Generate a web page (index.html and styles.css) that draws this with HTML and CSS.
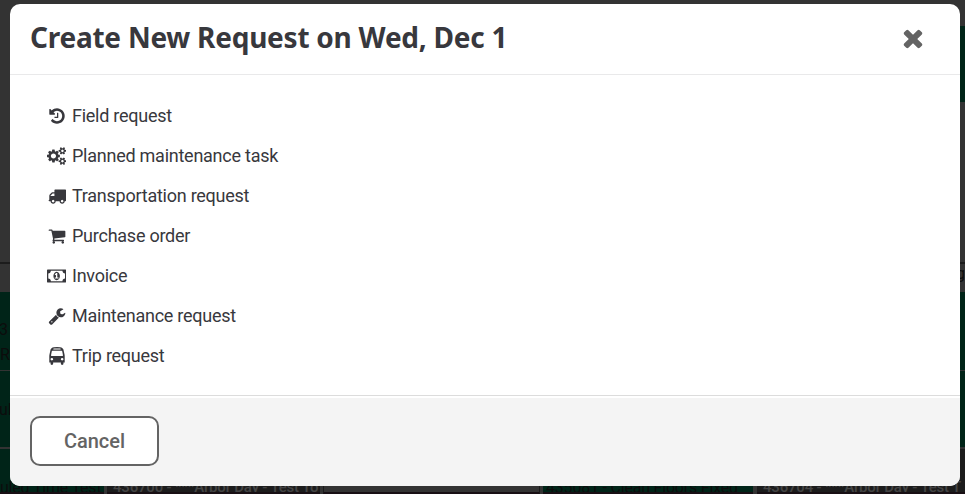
FILE: index.html
```html
<!DOCTYPE html>
<html lang="en-US">
<head>
<meta charset="utf-8">
<title>Create New Request</title>
<link rel="stylesheet" href="styles.css">
</head>
<body>
<!-- calendar behind the dialog -->
<div class="calendar" aria-hidden="true">
	<div class="day day-sun">
		<div class="head"></div>
		<div class="date"></div>
		<div class="event tall">3<br>RI</div>
		<div class="event second">ul</div>
		<div class="event last">uled Time Test</div>
	</div>
	<div class="day day-mon">
		<div class="head"></div>
		<div class="date"></div>
		<div class="event tall"></div>
		<div class="event second"></div>
		<div class="event last dark">436700 - ***Arbor Day - Test To</div>
	</div>
	<div class="day day-tue">
		<div class="head"></div>
		<div class="date"></div>
		<div class="event tall"></div>
		<div class="event second"></div>
		<div class="event last empty"></div>
	</div>
	<div class="day day-wed">
		<div class="head"></div>
		<div class="date"></div>
		<div class="event tall"></div>
		<div class="event second"></div>
		<div class="event last">435081 - Clean Floors Fixed</div>
	</div>
	<div class="day day-thu">
		<div class="head"><div class="save"></div></div>
		<div class="date">g</div>
		<div class="event tall"></div>
		<div class="event second"></div>
		<div class="event last dark">436704 - ***Arbor Day - Test T</div>
	</div>
</div>

<div class="modal">
	<div class="modal-header">
		<h1>Create New Request on Wed, Dec 1</h1>
		<button class="close" aria-label="Close"><svg viewBox="0 0 1792 1792"><path d="M1490 1322q0 40-28 68l-136 136q-28 28-68 28t-68-28l-294-294-294 294q-28 28-68 28t-68-28l-136-136q-28-28-28-68t28-68l294-294-294-294q-28-28-28-68t28-68l136-136q28-28 68-28t68 28l294 294 294-294q28-28 68-28t68 28l136 136q28 28 28 68t-28 68l-294 294 294 294q28 28 28 68z"/></svg></button>
	</div>
	<ul class="modal-body">
		<li><span class="icon"><svg viewBox="0 0 1792 1792"><path d="M1664 896q0 156-61 298t-164 245-245 164-298 61q-172 0-327-72.5t-264-204.5q-7-10-6.5-22.5t8.5-20.5l137-138q10-9 25-9 16 2 23 12 73 95 179 147t225 52q104 0 198.5-40.5t163.5-109.5 109.5-163.5 40.5-198.5-40.5-198.5-109.5-163.5-163.5-109.5-198.5-40.5q-98 0-188 35.5t-160 101.5l137 138q31 30 14 69-17 40-59 40h-448q-26 0-45-19t-19-45v-448q0-42 40-59 39-17 69 14l130 129q107-101 244.5-156.5t284.5-55.5q156 0 298 61t245 164 164 245 61 298zm-640-288v448q0 14-9 23t-23 9h-320q-14 0-23-9t-9-23v-64q0-14 9-23t23-9h224v-352q0-14 9-23t23-9h64q14 0 23 9t9 23z"/></svg></span>Field request</li>
		<li><span class="icon"><svg class="wide" viewBox="0 0 1920 1792"><path d="M896 896q0-106-75-181t-181-75-181 75-75 181 75 181 181 75 181-75 75-181zm768 512q0-52-38-90t-90-38-90 38-38 90q0 53 37.5 90.5t90.5 37.5 90.5-37.5 37.5-90.5zm0-1024q0-52-38-90t-90-38-90 38-38 90q0 53 37.5 90.5t90.5 37.5 90.5-37.5 37.5-90.5zm-384 421v185q0 10-7 19.5t-16 10.5l-155 24q-11 35-32 76 34 48 90 115 7 11 7 20 0 12-7 19-23 30-82.5 89.5t-78.5 59.5q-11 0-21-7l-115-90q-37 19-77 31-11 108-23 155-7 24-30 24h-186q-11 0-20-7.5t-10-17.5l-23-153q-34-10-75-31l-118 89q-7 7-20 7-11 0-21-8-144-133-144-160 0-9 7-19 10-14 41-53t47-61q-23-44-35-82l-152-24q-10-1-17-9.5t-7-19.5v-185q0-10 7-19.5t16-10.5l155-24q11-35 32-76-34-48-90-115-7-11-7-20 0-12 7-20 22-30 82-89t79-59q11 0 21 7l115 90q34-18 77-32 11-108 23-154 7-24 30-24h186q11 0 20 7.5t10 17.5l23 153q34 10 75 31l118-89q8-7 20-7 11 0 21 8 144 133 144 160 0 8-7 19-12 16-42 54t-45 60q23 48 34 82l152 23q10 2 17 10.5t7 19.5zm640 533v140q0 16-149 31-12 27-30 52 51 113 51 138 0 4-4 7-122 71-124 71-8 0-46-47t-52-68q-20 2-30 2t-30-2q-14 21-52 68t-46 47q-2 0-124-71-4-3-4-7 0-25 51-138-18-25-30-52-149-15-149-31v-140q0-16 149-31 13-29 30-52-51-113-51-138 0-4 4-7 4-2 35-20t59-34 30-16q8 0 46 46.5t52 67.5q20-2 30-2t30 2q51-71 92-112l6-2q4 0 124 70 4 3 4 7 0 25-51 138 17 23 30 52 149 15 149 31zm0-1024v140q0 16-149 31-12 27-30 52 51 113 51 138 0 4-4 7-122 71-124 71-8 0-46-47t-52-68q-20 2-30 2t-30-2q-14 21-52 68t-46 47q-2 0-124-71-4-3-4-7 0-25 51-138-18-25-30-52-149-15-149-31v-140q0-16 149-31 13-29 30-52-51-113-51-138 0-4 4-7 4-2 35-20t59-34 30-16q8 0 46 46.5t52 67.5q20-2 30-2t30 2q51-71 92-112l6-2q4 0 124 70 4 3 4 7 0 25-51 138 17 23 30 52 149 15 149 31z"/></svg></span>Planned maintenance task</li>
		<li><span class="icon"><svg viewBox="0 0 1792 1792"><path d="M640 1408q0-52-38-90t-90-38-90 38-38 90 38 90 90 38 90-38 38-90zm-384-512h384v-256h-158q-13 0-22 9l-195 195q-9 9-9 22v30zm1280 512q0-52-38-90t-90-38-90 38-38 90 38 90 90 38 90-38 38-90zm256-1088v1024q0 15-4 26.5t-13.5 18.5-16.5 11.5-23.5 6-22.5 2-25.5 0-22.5-.5q0 106-75 181t-181 75-181-75-75-181h-384q0 106-75 181t-181 75-181-75-75-181h-64q-3 0-22.5.5t-25.5 0-22.5-2-23.5-6-16.5-11.5-13.5-18.5-4-26.5q0-26 19-45t45-19v-320q0-8-.5-35t0-38 2.5-34.5 6.5-37 14-30.5 22.5-30l198-198q19-19 50.5-32t58.5-13h160v-192q0-26 19-45t45-19h1024q26 0 45 19t19 45z"/></svg></span>Transportation request</li>
		<li><span class="icon"><svg viewBox="0 0 1792 1792"><path d="M704 1536q0 52-38 90t-90 38-90-38-38-90 38-90 90-38 90 38 38 90zm896 0q0 52-38 90t-90 38-90-38-38-90 38-90 90-38 90 38 38 90zm128-1088v512q0 24-16.5 42.5t-40.5 21.5l-1044 122q13 60 13 70 0 16-24 64h920q26 0 45 19t19 45-19 45-45 19h-1024q-26 0-45-19t-19-45q0-11 8-31.5t16-36 21.5-40 15.5-29.5l-177-823h-204q-26 0-45-19t-19-45 19-45 45-19h256q16 0 28.5 6.5t19.5 15.5 13 24.5 8 26 5.5 29.5 4.5 26h1201q26 0 45 19t19 45z"/></svg></span>Purchase order</li>
		<li><span class="icon"><svg class="wide" viewBox="0 0 1920 1792"><path d="M768 1152h384v-96h-128v-448h-114l-148 137 77 80q42-37 55-57h2v288h-128v96zm512-256q0 70-21 142t-59.5 134-101.5 101-138 39-138-39-101.5-101-59.5-134-21-142 21-142 59.5-134 101.5-101 138-39 138 39 101.5 101 59.5 134 21 142zm512 256v-512q-106 0-181-75t-75-181h-1152q0 106-75 181t-181 75v512q106 0 181 75t75 181h1152q0-106 75-181t181-75zm128-832v1152q0 26-19 45t-45 19h-1792q-26 0-45-19t-19-45v-1152q0-26 19-45t45-19h1792q26 0 45 19t19 45z"/></svg></span>Invoice</li>
		<li><span class="icon"><svg viewBox="0 0 1792 1792"><path d="M448 1472q0-26-19-45t-45-19-45 19-19 45 19 45 45 19 45-19 19-45zm644-420l-682 682q-37 37-90 37-52 0-91-37l-106-108q-38-36-38-90 0-53 38-91l681-681q39 98 114.5 173.5t173.5 114.5zm634-435q0 39-23 106-47 134-164.5 217.5t-258.5 83.5q-185 0-316.5-131.5t-131.5-316.5 131.5-316.5 316.5-131.5q58 0 121.5 16.5t107.5 46.5q16 11 16 28t-16 28l-293 169v224l193 107q5-3 79-48.5t135.5-81 70.5-35.5q15 0 23.5 10t8.5 25z"/></svg></span>Maintenance request</li>
		<li><span class="icon"><svg viewBox="0 0 1792 1792"><path d="M512 1216q0-53-37.5-90.5t-90.5-37.5-90.5 37.5-37.5 90.5 37.5 90.5 90.5 37.5 90.5-37.5 37.5-90.5zm1024 0q0-53-37.5-90.5t-90.5-37.5-90.5 37.5-37.5 90.5 37.5 90.5 90.5 37.5 90.5-37.5 37.5-90.5zm-46-396l-72-384q-5-23-22.5-37.5t-40.5-14.5h-918q-23 0-40.5 14.5t-22.5 37.5l-72 384q-5 30 14 53t49 23h1062q30 0 49-23t14-53zm-226-612q0-20-14-34t-34-14h-640q-20 0-34 14t-14 34 14 34 34 14h640q20 0 34-14t14-34zm400 725v603h-128v128q0 53-37.5 90.5t-90.5 37.5-90.5-37.5-37.5-90.5v-128h-768v128q0 53-37.5 90.5t-90.5 37.5-90.5-37.5-37.5-90.5v-128h-128v-603q0-112 25-223l103-454q9-78 97.5-137t230-89 312.5-30 312.5 30 230 89 97.5 137l105 454q23 102 23 223z"/></svg></span>Trip request</li>
	</ul>
	<div class="modal-footer">
		<button class="cancel">Cancel</button>
	</div>
</div>
</body>
</html>
```

FILE: styles.css
```css
* {
	box-sizing: border-box;
}
body {
	margin: 0;
	height: 494px;
	overflow: hidden;
	background-color: #333;
	color: #38383d;
	font-family: Roboto, sans-serif;
	font-size: 18px;
}

/* calendar */
.calendar {
	display: grid;
	grid-template-columns: 104px 219px 220px 210px 212px;
	height: 494px;
	overflow: hidden;
	color: #0c0c0c;
	font-size: 16px;
}
.day {
	overflow: hidden;
}
.day-mon .last {
	margin-left: 3px;
	margin-right: 3px;
}
.day-thu .last {
	margin-left: 4px;
}
.head {
	height: 262px;
	padding-top: 26px;
}
.save {
	height: 76px;
	background-color: #002418;
}
.date {
	height: 30px;
	border-top: 2px solid #1c1c1c;
	text-align: right;
}
.event {
	background-color: #002418;
	white-space: nowrap;
	overflow: hidden;
}
.tall {
	height: 78px;
	padding-top: 25px;
	line-height: 25px;
}
.day-sun .tall, .day-sun .second {
	text-indent: -1px;
}
.second {
	height: 79px;
	border-top: 1px solid #333;
	border-bottom: 2px solid #333;
	padding-top: 29px;
}
.last {
	height: 45px;
	padding-top: 29px;
	border-bottom: 2px solid #180f14;
	line-height: 19px;
	letter-spacing: -0.2px;
}
.day-wed .last {
	padding-left: 3px;
}
.dark {
	background-color: #1c1c1c;
	color: #444;
	font-size: 15px;
	font-weight: 500;
	padding-left: 6px;
}
.empty {
	margin-right: 3px;
	background-color: #333;
	border-left: 1px solid #1c1c1c;
	border-right: 1px solid #1c1c1c;
}

/* dialog */
.modal {
	position: absolute;
	top: 4px;
	left: 10px;
	width: 950px;
	height: 482px;
	background-color: #fff;
	border-radius: 10px;
	overflow: hidden;
}
.modal-header {
	display: flex;
	justify-content: space-between;
	height: 71px;
	padding: 12px 33px 0 20px;
	border-bottom: 1px solid #e9e9ea;
}
h1 {
	margin: 0;
	font-family: "Noto Sans", sans-serif;
	font-size: 28px;
	font-weight: 700;
	line-height: 42px;
	letter-spacing: -0.24px;
	white-space: nowrap;
}
.close {
	width: 28px;
	height: 28px;
	margin-top: 8px;
	padding: 0;
	border: none;
	background: none;
}
.close svg {
	display: block;
	width: 28px;
	height: 28px;
	fill: #646464;
}
.modal-body {
	height: 320px;
	margin: 0;
	padding: 20px 35px 0;
	list-style: none;
	letter-spacing: -0.25px;
}
.modal-body li {
	display: flex;
	align-items: center;
	height: 40px;
}
.icon {
	display: flex;
	justify-content: center;
	width: 23px;
	margin-right: 4px;
	padding-top: 1px;
}
.icon svg {
	width: 18px;
	height: 18px;
	fill: #38383d;
}
.icon .wide {
	width: 19.3px;
}
.modal-footer {
	height: 91px;
	padding: 20px 20px 18px;
	background-color: #f4f4f4;
	border-top: 1px solid #dcdcdc;
	box-shadow: inset 0 2px #fff;
}
.cancel {
	width: 129px;
	height: 50px;
	padding: 0;
	background-color: #fff;
	border: 2px solid #646464;
	border-radius: 10px;
	color: #646464;
	font-family: Roboto, sans-serif;
	font-size: 20px;
	font-weight: 500;
}
```
